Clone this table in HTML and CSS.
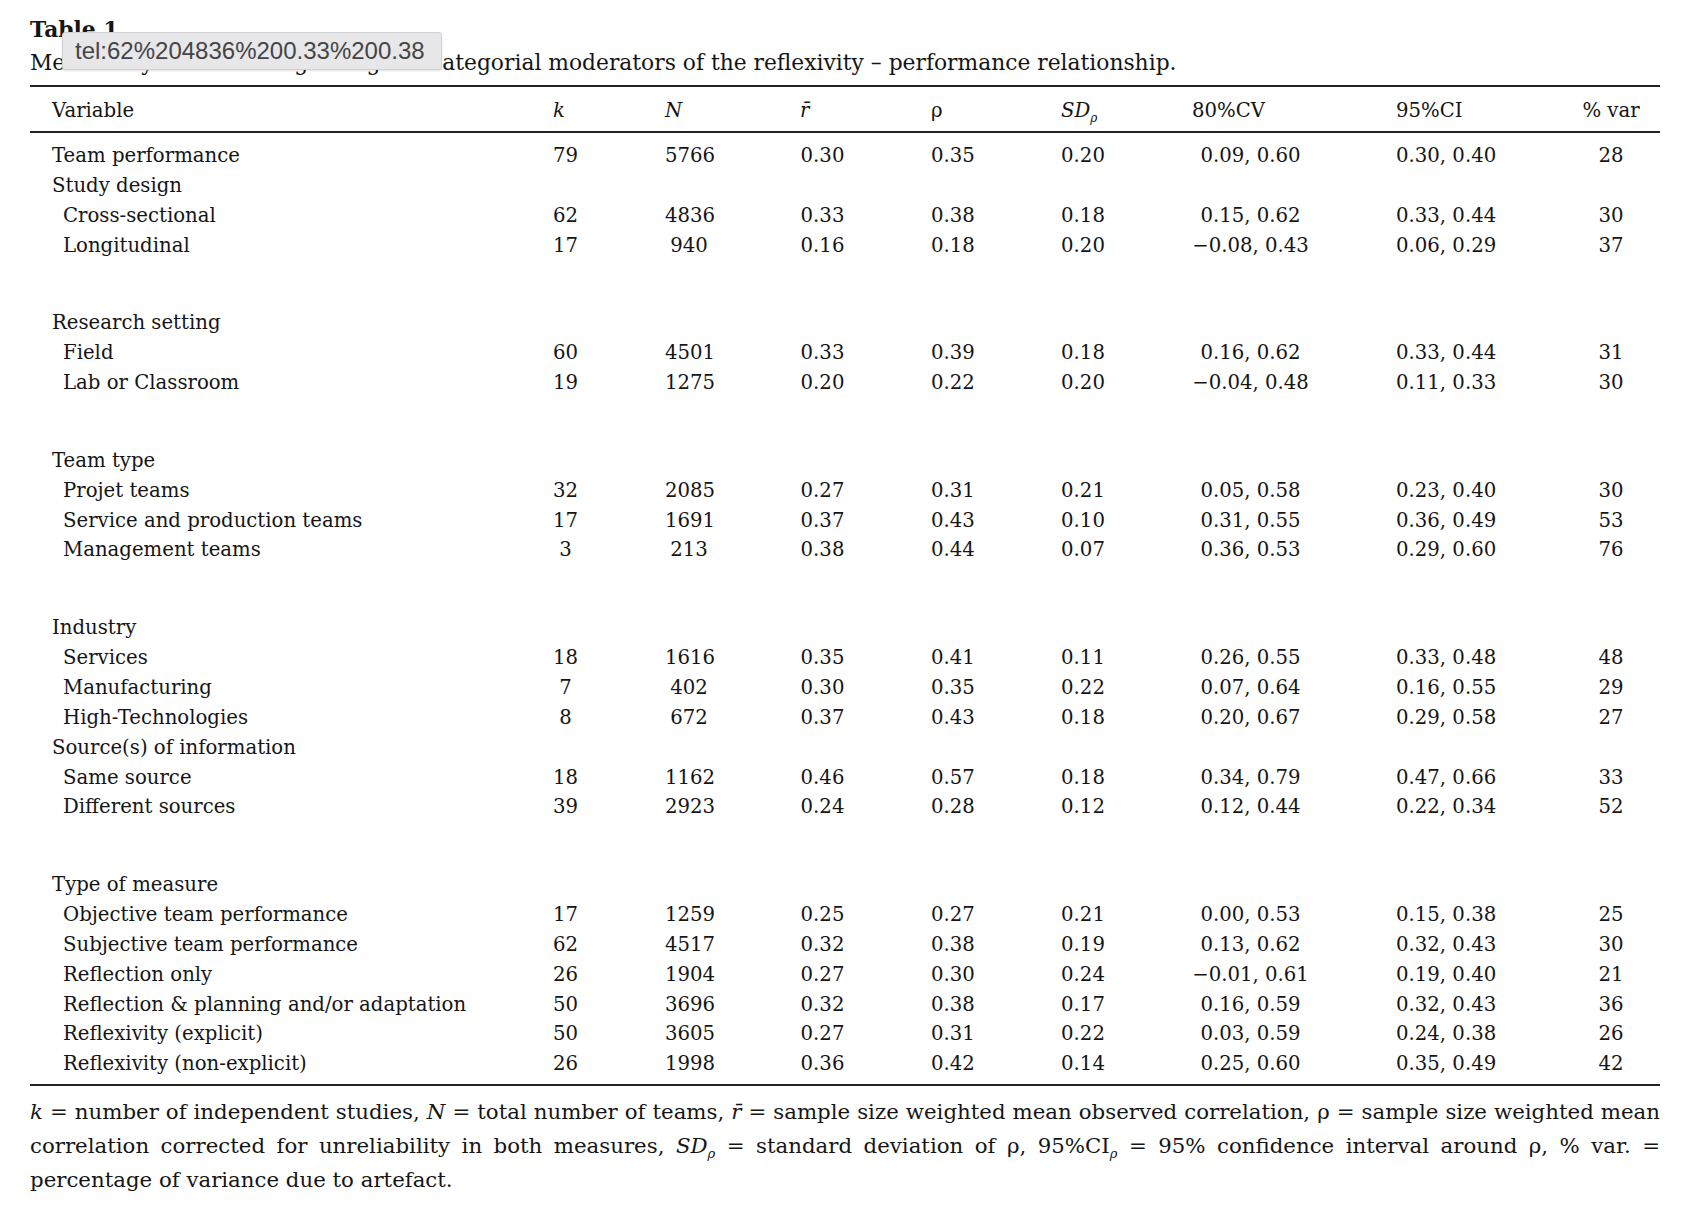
FILE: index.html
```html
<!DOCTYPE html>
<html lang="en">
<head>
<meta charset="utf-8">
<title>Table 1</title>
<link rel="stylesheet" href="styles.css">
</head>
<body>
<div class="page">
  <div class="title">Table 1</div>
  <div class="caption">Meta-analytic results regarding the categorial moderators of the reflexivity – performance relationship.</div>

  <div class="table">
    <div class="row head">
      <div>Variable</div>
      <div><i>k</i></div>
      <div><i>N</i></div>
      <div><i>r̄</i></div>
      <div>ρ</div>
      <div><i>SD</i><sub><i>ρ</i></sub></div>
      <div>80%CV</div>
      <div>95%CI</div>
      <div class="pv">% var</div>
    </div>

    <div class="body">
      <div class="row"><div class="lab">Team performance</div><div>79</div><div>5766</div><div>0.30</div><div>0.35</div><div>0.20</div><div>0.09, 0.60</div><div>0.30, 0.40</div><div>28</div></div>
      <div class="row"><div class="lab">Study design</div></div>
      <div class="row"><div class="lab sub">Cross-sectional</div><div>62</div><div>4836</div><div>0.33</div><div>0.38</div><div>0.18</div><div>0.15, 0.62</div><div>0.33, 0.44</div><div>30</div></div>
      <div class="row"><div class="lab sub">Longitudinal</div><div>17</div><div>940</div><div>0.16</div><div>0.18</div><div>0.20</div><div>−0.08, 0.43</div><div>0.06, 0.29</div><div>37</div></div>
      <div class="spacer"></div>
      <div class="row"><div class="lab">Research setting</div></div>
      <div class="row"><div class="lab sub">Field</div><div>60</div><div>4501</div><div>0.33</div><div>0.39</div><div>0.18</div><div>0.16, 0.62</div><div>0.33, 0.44</div><div>31</div></div>
      <div class="row"><div class="lab sub">Lab or Classroom</div><div>19</div><div>1275</div><div>0.20</div><div>0.22</div><div>0.20</div><div>−0.04, 0.48</div><div>0.11, 0.33</div><div>30</div></div>
      <div class="spacer"></div>
      <div class="row"><div class="lab">Team type</div></div>
      <div class="row"><div class="lab sub">Projet teams</div><div>32</div><div>2085</div><div>0.27</div><div>0.31</div><div>0.21</div><div>0.05, 0.58</div><div>0.23, 0.40</div><div>30</div></div>
      <div class="row"><div class="lab sub">Service and production teams</div><div>17</div><div>1691</div><div>0.37</div><div>0.43</div><div>0.10</div><div>0.31, 0.55</div><div>0.36, 0.49</div><div>53</div></div>
      <div class="row"><div class="lab sub">Management teams</div><div>3</div><div>213</div><div>0.38</div><div>0.44</div><div>0.07</div><div>0.36, 0.53</div><div>0.29, 0.60</div><div>76</div></div>
      <div class="spacer"></div>
      <div class="row"><div class="lab">Industry</div></div>
      <div class="row"><div class="lab sub">Services</div><div>18</div><div>1616</div><div>0.35</div><div>0.41</div><div>0.11</div><div>0.26, 0.55</div><div>0.33, 0.48</div><div>48</div></div>
      <div class="row"><div class="lab sub">Manufacturing</div><div>7</div><div>402</div><div>0.30</div><div>0.35</div><div>0.22</div><div>0.07, 0.64</div><div>0.16, 0.55</div><div>29</div></div>
      <div class="row"><div class="lab sub">High-Technologies</div><div>8</div><div>672</div><div>0.37</div><div>0.43</div><div>0.18</div><div>0.20, 0.67</div><div>0.29, 0.58</div><div>27</div></div>
      <div class="row"><div class="lab">Source(s) of information</div></div>
      <div class="row"><div class="lab sub">Same source</div><div>18</div><div>1162</div><div>0.46</div><div>0.57</div><div>0.18</div><div>0.34, 0.79</div><div>0.47, 0.66</div><div>33</div></div>
      <div class="row"><div class="lab sub">Different sources</div><div>39</div><div>2923</div><div>0.24</div><div>0.28</div><div>0.12</div><div>0.12, 0.44</div><div>0.22, 0.34</div><div>52</div></div>
      <div class="spacer"></div>
      <div class="row"><div class="lab">Type of measure</div></div>
      <div class="row"><div class="lab sub">Objective team performance</div><div>17</div><div>1259</div><div>0.25</div><div>0.27</div><div>0.21</div><div>0.00, 0.53</div><div>0.15, 0.38</div><div>25</div></div>
      <div class="row"><div class="lab sub">Subjective team performance</div><div>62</div><div>4517</div><div>0.32</div><div>0.38</div><div>0.19</div><div>0.13, 0.62</div><div>0.32, 0.43</div><div>30</div></div>
      <div class="row"><div class="lab sub">Reflection only</div><div>26</div><div>1904</div><div>0.27</div><div>0.30</div><div>0.24</div><div>−0.01, 0.61</div><div>0.19, 0.40</div><div>21</div></div>
      <div class="row"><div class="lab sub">Reflection &amp; planning and/or adaptation</div><div>50</div><div>3696</div><div>0.32</div><div>0.38</div><div>0.17</div><div>0.16, 0.59</div><div>0.32, 0.43</div><div>36</div></div>
      <div class="row"><div class="lab sub">Reflexivity (explicit)</div><div>50</div><div>3605</div><div>0.27</div><div>0.31</div><div>0.22</div><div>0.03, 0.59</div><div>0.24, 0.38</div><div>26</div></div>
      <div class="row"><div class="lab sub">Reflexivity (non-explicit)</div><div>26</div><div>1998</div><div>0.36</div><div>0.42</div><div>0.14</div><div>0.25, 0.60</div><div>0.35, 0.49</div><div>42</div></div>
    </div>
  </div>

  <div class="notes">
    <div class="line"><i>k</i> = number of independent studies, <i>N</i> = total number of teams, <i>r̄</i> = sample size weighted mean observed correlation, ρ = sample size weighted mean</div>
    <div class="line">correlation corrected for unreliability in both measures, <i>SD</i><sub><i>ρ</i></sub> = standard deviation of ρ, 95%CI<sub><i>ρ</i></sub> = 95% confidence interval around ρ, % var. =</div>
    <div class="line last">percentage of variance due to artefact.</div>
  </div>

  <div class="tip">tel:62%204836%200.33%200.38</div>
</div>
</body>
</html>
```

FILE: styles.css
```css
html, body {
  margin: 0;
  padding: 0;
  background: #ffffff;
}

.page {
  position: relative;
  width: 1630px;
  padding: 14px 0 0 30px;
  color: #151515;
  font-family: "DejaVu Serif", "Liberation Serif", serif;
}

.title {
  font-size: 21.8px;
  font-weight: bold;
  line-height: 32px;
}

.caption {
  font-size: 21.8px;
  line-height: 32px;
  margin-top: 1px;
  margin-bottom: 6px;
}

.table {
  border-top: 2px solid #222;
  border-bottom: 2px solid #222;
  font-size: 19.7px;
}

.row {
  display: grid;
  grid-template-columns: 501px 112px 135px 131px 130px 131px 204px 186px 58px;
  padding: 0 20px 0 22px;
  height: 29.85px;
  line-height: 29.85px;
  white-space: nowrap;
}

.row > div {
  text-align: center;
}

.row > div.lab {
  text-align: left;
}

.lab.sub {
  padding-left: 11px;
}

.row > div:nth-child(2) { width: 25px; }
.row > div:nth-child(3) { width: 48px; }
.row > div:nth-child(4) { width: 45px; }
.row > div:nth-child(5) { width: 43px; }
.row > div:nth-child(6) { width: 44px; }
.row > div:nth-child(7) { width: 117px; }
.row > div:nth-child(8) { width: 100px; }
.row > div:nth-child(9) { width: 58px; }

.row.head {
  height: 44px;
  line-height: 44px;
  border-bottom: 2px solid #222;
}

.row.head > div {
  text-align: left;
  width: auto;
  padding-top: 2px;
}

.row.head > div.pv {
  text-align: center;
  width: 58px;
}

.row.head sub {
  font-size: 12px;
  line-height: 0;
  vertical-align: -5px;
}

.body {
  padding: 8px 0 5px;
}

.spacer {
  height: 48px;
}

.notes {
  margin-top: 9px;
  font-size: 21.3px;
  line-height: 34px;
}

.notes .line {
  white-space: nowrap;
  text-align: justify;
  text-align-last: justify;
}

.notes .line.last {
  text-align-last: left;
}

.notes sub {
  font-size: 13px;
  line-height: 0;
  vertical-align: -5px;
}

.tip {
  position: absolute;
  left: 62px;
  top: 32px;
  width: 380px;
  height: 38px;
  box-sizing: border-box;
  padding-left: 12px;
  background: #e7e7e9;
  border: 1px solid #d2d2d4;
  border-radius: 3px;
  box-shadow: 0 1px 2px rgba(0, 0, 0, 0.12);
  color: #444446;
  font-family: "Liberation Sans", Arial, sans-serif;
  font-size: 24px;
  line-height: 36px;
}
```
